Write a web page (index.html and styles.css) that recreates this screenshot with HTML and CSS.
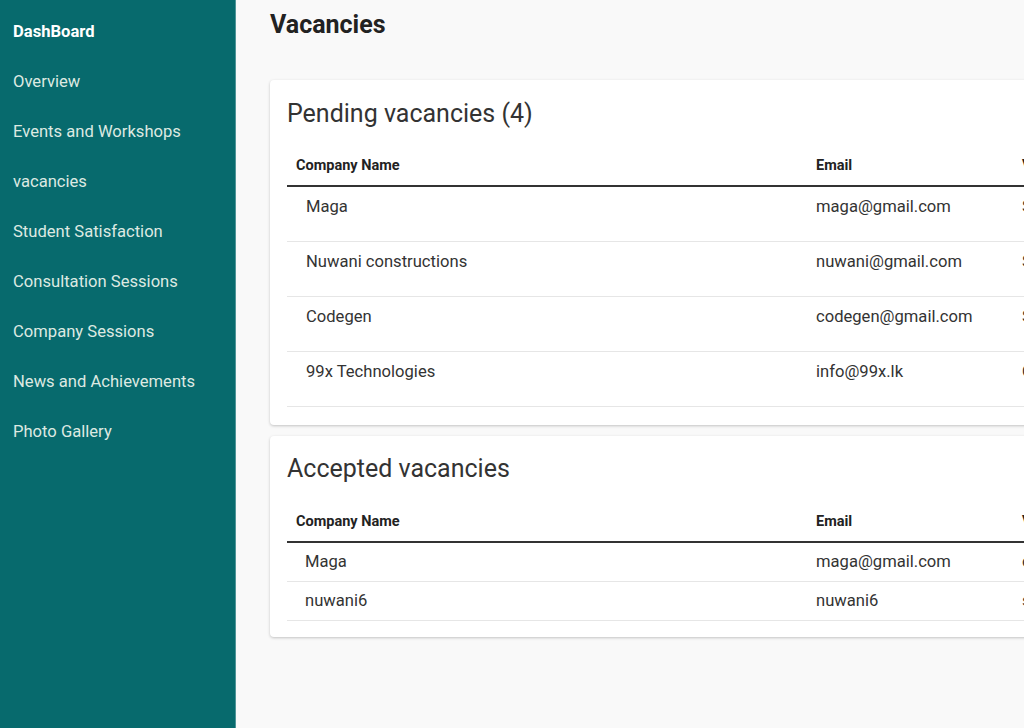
FILE: index.html
```html
<!DOCTYPE html>
<html>
<head>
<meta charset="utf-8">
<title>Vacancies</title>
<link rel="stylesheet" href="styles.css">
</head>
<body>
<nav class="sidebar">
  <a class="nav-item nav-title">DashBoard</a>
  <a class="nav-item">Overview</a>
  <a class="nav-item">Events and Workshops</a>
  <a class="nav-item">vacancies</a>
  <a class="nav-item">Student Satisfaction</a>
  <a class="nav-item">Consultation Sessions</a>
  <a class="nav-item">Company Sessions</a>
  <a class="nav-item">News and Achievements</a>
  <a class="nav-item">Photo Gallery</a>
</nav>
<main class="main">
  <h1 class="page-title">Vacancies</h1>
  <section class="card">
    <h2 class="card-title">Pending vacancies (4)</h2>
    <table class="table table-pending">
      <thead>
        <tr><th class="c1">Company Name</th><th class="c2">Email</th><th class="c3">Vacancy</th></tr>
      </thead>
      <tbody>
        <tr><td class="c1">Maga</td><td class="c2">maga@gmail.com</td><td class="c3">Software Engineer</td></tr>
        <tr><td class="c1">Nuwani constructions</td><td class="c2">nuwani@gmail.com</td><td class="c3">Site Engineer</td></tr>
        <tr><td class="c1">Codegen</td><td class="c2">codegen@gmail.com</td><td class="c3">Software Engineer</td></tr>
        <tr><td class="c1">99x Technologies</td><td class="c2">info@99x.lk</td><td class="c3">QA Engineer</td></tr>
      </tbody>
    </table>
  </section>
  <section class="card card-accepted">
    <h2 class="card-title">Accepted vacancies</h2>
    <table class="table table-accepted">
      <thead>
        <tr><th class="c1">Company Name</th><th class="c2">Email</th><th class="c3">Vacancy</th></tr>
      </thead>
      <tbody>
        <tr><td class="c1">Maga</td><td class="c2">maga@gmail.com</td><td class="c3">c</td></tr>
        <tr><td class="c1">nuwani6</td><td class="c2">nuwani6</td><td class="c3">s</td></tr>
      </tbody>
    </table>
  </section>
</main>
</body>
</html>
```

FILE: styles.css
```css
* { box-sizing: border-box; }
html, body {
  margin: 0;
  height: 728px;
  overflow: hidden;
}
body {
  display: flex;
  font-family: Roboto, "Liberation Sans", sans-serif;
  background: #f9f9f9;
  color: #333;
}
.sidebar {
  width: 236px;
  flex: none;
  background: #076a6d;
  border-right: 1px solid #4f9598;
  padding: 20px 13px;
  display: flex;
  flex-direction: column;
  gap: 26px;
}
.nav-item {
  display: block;
  font-size: 16.6px;
  line-height: 24px;
  color: #dde9e2;
  white-space: nowrap;
}
.nav-title {
  font-weight: 700;
  color: #ffffff;
}
.main {
  flex: 1;
  min-width: 0;
  padding: 0 0 0 34px;
  overflow: hidden;
}
.page-title {
  margin: 11px 0 41px;
  font-size: 25px;
  line-height: 28px;
  font-weight: 700;
  color: #222;
}
.card {
  width: 900px;
  background: #fff;
  border-radius: 4px;
  box-shadow: 0 1px 3px rgba(0, 0, 0, 0.22);
  padding: 18px 17px 18px;
  margin-bottom: 11px;
}
.card-accepted {
  padding-top: 17px;
  padding-bottom: 16px;
}
.card-title {
  margin: 0 0 15px;
  font-size: 25px;
  line-height: 32px;
  font-weight: 400;
  color: #333;
}
.card-accepted .card-title { margin-bottom: 16px; }
.table {
  width: 866px;
  border-collapse: collapse;
  table-layout: fixed;
}
.table th {
  height: 41px;
  text-align: left;
  font-size: 14.5px;
  font-weight: 700;
  color: #222;
  padding: 0 9px;
  border-bottom: 2px solid #333;
  vertical-align: middle;
  white-space: nowrap;
  overflow: hidden;
}
.table td {
  font-size: 16.6px;
  line-height: 20px;
  color: #333;
  padding: 10px 9px 24px;
  border-bottom: 1px solid #e6e6e6;
  white-space: nowrap;
  overflow: hidden;
}
.table td.c1 { padding-left: 19px; }
.table-accepted td {
  padding-top: 9px;
  padding-bottom: 9px;
}
.table-accepted td.c1 { padding-left: 18px; }
.c1 { width: 520px; }
.c2 { width: 206px; }
.c3 { width: 140px; }
```
